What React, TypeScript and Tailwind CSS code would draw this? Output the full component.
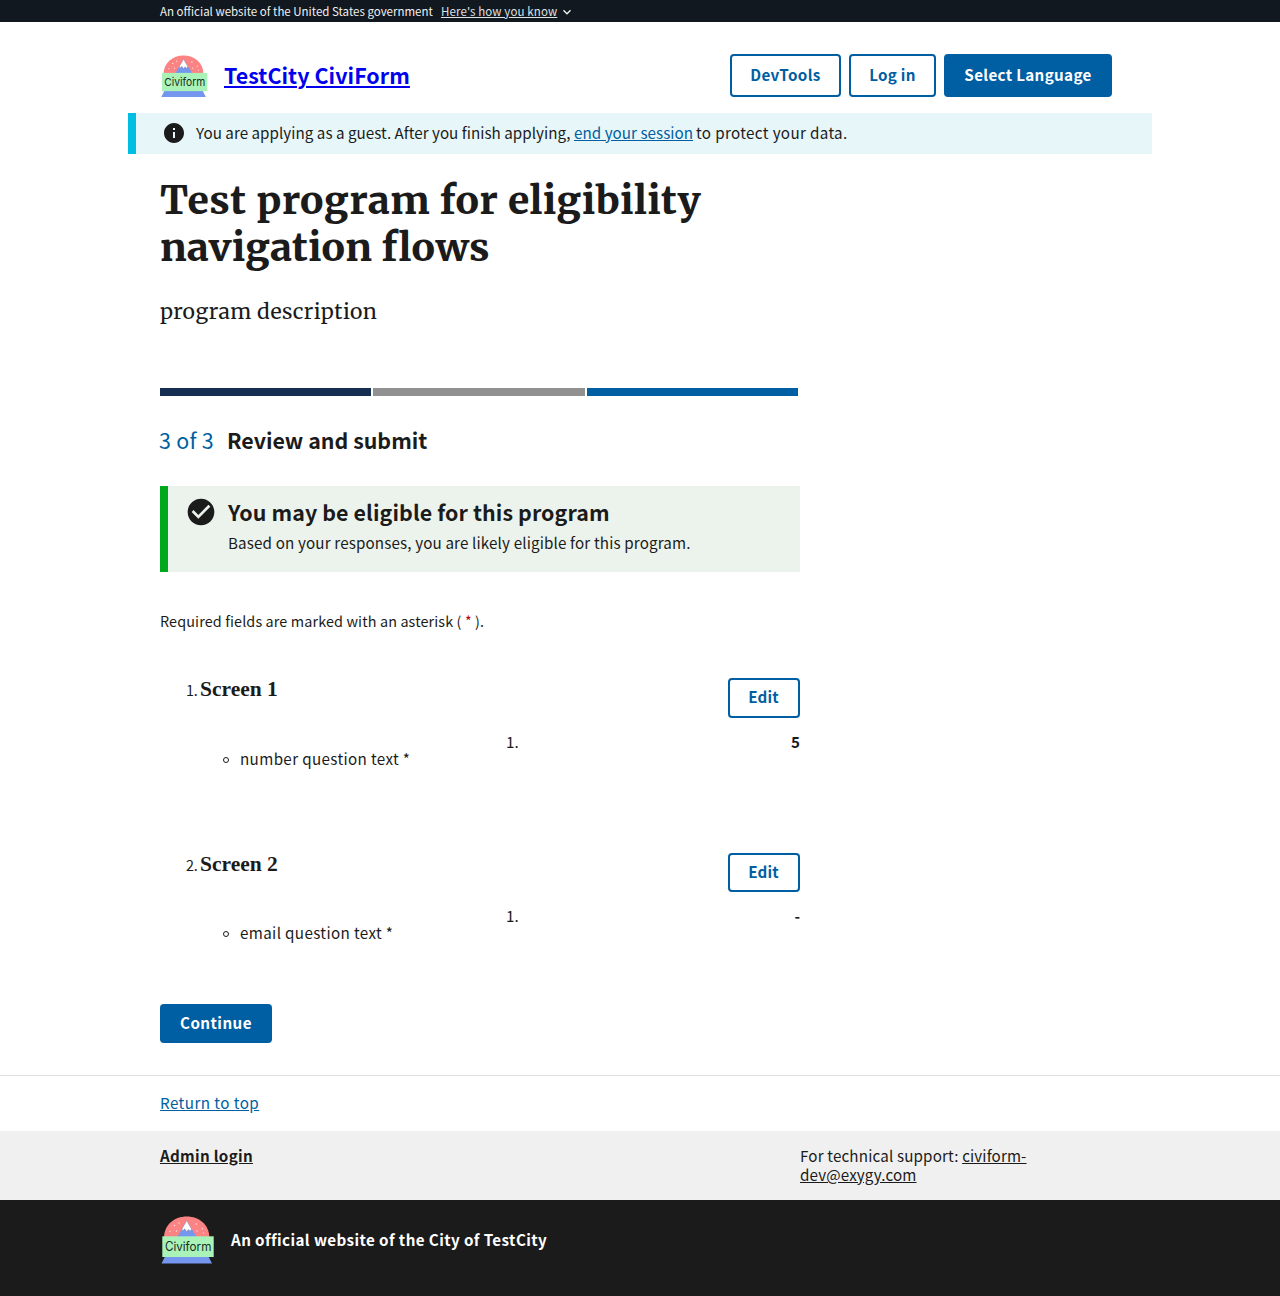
import React from "react";
import { MdCheckCircle, MdInfo, MdExpandMore } from "react-icons/md";

function Logo({ className }: { className: string }) {
  return (
    <svg viewBox="0 0 54 48" className={className} aria-label="Civiform logo">
      <path d="M4 21C4.5 9 14 .6 26.7 .6S49 9 49.3 21z" fill="#fc8383" />
      <path d="M17.3 21 L26.7 4.7 L36.7 21z" fill="#7596ee" />
      <path d="M26.7 4.7 L31.5 13 L30.3 15 L28.3 13.4 L26.7 15.6 L24.8 12.8 L22.6 14.8 L22 13z" fill="#fff" stroke="#8a8a99" strokeWidth=".4" />
      <g fill="#fff" opacity=".8">
        <circle cx="14.5" cy="9.5" r=".8" />
        <circle cx="19" cy="7" r=".7" />
        <circle cx="10" cy="15.5" r=".7" />
        <circle cx="16.5" cy="15" r=".7" />
        <circle cx="36.2" cy="8" r=".8" />
        <circle cx="42.3" cy="12.7" r=".7" />
        <circle cx="37" cy="15" r=".7" />
        <circle cx="43.5" cy="17" r=".6" />
      </g>
      <path d="M5 40.5h43.5l3.5 7.1h-50.5z" fill="#7596ee" />
      <rect x="2.3" y="20.3" width="51.4" height="20.7" fill="#a9f3b8" />
      <text x="4.9" y="35.3" textLength="46.5" lengthAdjust="spacingAndGlyphs" fontSize="12.5" fontFamily="Inter, sans-serif" fill="#1b2b24">
        Civiform
      </text>
    </svg>
  );
}

const outline =
  "flex items-center justify-center rounded border-2 border-[#005ea2] bg-white pb-[2px] font-bold text-[15.2px] leading-none text-[#005ea2]";

function Screen({ n, question, answer, height, edit }: { n: number; question: string; answer: string; height: string; edit: string }) {
  return (
    <section className={height}>
      <div className="flex justify-between">
        <div className="-mt-px flex h-6 items-baseline pl-[26px]">
          <span className="w-[14px] text-[14.4px] leading-6 tracking-[-0.3px]">{n}.</span>
          <h2 className="font-['Liberation_Serif',serif] text-[21.5px] font-bold leading-6">Screen {n}</h2>
        </div>
        <button className={`${outline} ${edit} w-[72px] pr-[1px] tracking-[.15px]`}>Edit</button>
      </div>
      <div className="flex pt-[13px] leading-5">
        <div className="flex w-[346px] items-center pl-[63px] pt-[17px]">
          <span className="mt-[3px] size-[6px] rounded-full border border-[#1b1b1b]" />
          <span className="pl-[11px] tracking-[.36px]">{question}</span>
        </div>
        <span>1.</span>
        <span className="ml-auto font-bold">{answer}</span>
      </div>
    </section>
  );
}

export default function App() {
  return (
    <div className="min-h-[1296px] bg-white font-['Noto_Sans_CJK_SC',sans-serif] text-[15.2px] text-[#1b1b1b]">
      <div className="flex h-[22px] items-center bg-[#11181f] pl-[160px] text-[11.5px] leading-[22px] text-[#f0f0f0]">
        <span className="w-[281px]">An official website of the United States government</span>
        <a className="tracking-[.12px] text-[#dfe1e2] underline underline-offset-1">Here's how you know</a>
        <MdExpandMore className="ml-[2px] mt-[2px] size-4" />
      </div>

      <header className="flex h-[91px] items-start pl-[160px] pr-[168px] pt-8">
        <Logo className="mt-[.6px] h-[42.3px] w-[47.6px]" />
        <a className="ml-[16.4px] pt-[7px] text-[21.4px] font-bold leading-7 tracking-[.08px] text-[#0000ee] underline decoration-2 underline-offset-2">TestCity CiviForm</a>
        <nav className="ml-auto flex gap-2">
          <button className={`${outline} h-[43px] w-[111px] tracking-[.36px]`}>DevTools</button>
          <button className={`${outline} h-[43px] w-[87px] tracking-[.25px]`}>Log in</button>
          <button className="h-[43px] w-[168px] rounded bg-[#005ea2] pb-[2px] font-bold leading-none tracking-[.33px] text-white">Select Language</button>
        </nav>
      </header>

      <div className="mx-auto flex h-[41px] w-[1024px] items-center border-l-8 border-[#00bde3] bg-[#e7f6f8] pb-[1.5px] pl-[26px] leading-5">
        <MdInfo className="size-6" />
        <p className="flex whitespace-pre pb-[2px] pl-[10px]">
          <span className="w-[378px] tracking-[.03px]">You are applying as a guest. After you finish applying,</span>
          <a className="w-[122px] tracking-[.04px] text-[#005ea2] underline underline-offset-1">end your session</a>
          <span className="tracking-[.35px]">to protect your data.</span>
        </p>
      </div>

      <main className="ml-[160px] w-[640px]">
        <h1 className="h-[118px] pt-[23px] font-['Merriweather','DejaVu_Serif_Condensed',serif] text-[39px] font-extrabold leading-[47px]">
          <span className="tracking-[.48px]">Test program for eligibility</span>
          <br />
          <span className="tracking-[.2px]">navigation flows</span>
        </h1>
        <p className="mt-[26px] h-[28px] font-['Merriweather','DejaVu_Serif_Condensed',serif] text-[21.2px] leading-[28px] tracking-[.38px]">program description</p>

        <div className="mt-[62px] flex h-2 w-[638px] gap-[2px]">
          <div className="flex-1 bg-[#162e51]" />
          <div className="flex-1 bg-[#919191]" />
          <div className="flex-1 bg-[#005ea2]" />
        </div>
        <div className="mt-[30px] flex h-7 text-[21.4px] leading-7">
          <span className="ml-[-1px] w-[68px] tracking-[.3px] text-[#005ea2]">3 of 3</span>
          <h2 className="font-bold">Review and submit</h2>
        </div>

        <div className="mt-8 flex h-[86px] border-l-8 border-[#00a91c] bg-[#ecf3ec] pl-[17px] pt-[10px]">
          <MdCheckCircle className="size-8" />
          <div className="pl-[11px]">
            <h3 className="h-8 text-[21.4px] font-bold leading-8 tracking-[.1px]">You may be eligible for this program</h3>
            <p className="leading-7 tracking-[.14px]">Based on your responses, you are likely eligible for this program.</p>
          </div>
        </div>

        <p className="mt-[39px] h-[67px] whitespace-pre text-[14.4px] leading-5 tracking-[.12px]">
          Required fields are marked with an asterisk ( <span className="text-[#b50909]">*</span> ).
        </p>
        <Screen n={1} question="number question text *" answer="5" height="h-[175px]" edit="h-[40px]" />
        <Screen n={2} question="email question text *" answer="-" height="h-[151px]" edit="h-[39px]" />
        <button className="h-[39px] w-[112px] rounded bg-[#005ea2] pb-[2px] font-bold leading-none tracking-[.44px] text-white">Continue</button>
      </main>

      <footer className="mt-8">
        <div className="flex h-14 items-center border-t border-[#dfe1e2] pb-[2px] pl-[160px]">
          <a className="tracking-[.44px] text-[#005ea2] underline underline-offset-1">Return to top</a>
        </div>
        <div className="flex h-[69px] bg-[#f0f0f0] pl-[160px] pt-[15px] leading-[19px]">
          <a className="w-[640px] font-bold tracking-[.3px] underline underline-offset-1">Admin login</a>
          <p className="tracking-[.15px]">
            For technical support: <a className="tracking-[.13px] underline underline-offset-1">civiform-<br />dev@exygy.com</a>
          </p>
        </div>
        <div className="flex h-24 items-start bg-[#1b1b1b] pl-[160px] pt-4">
          <Logo className="h-12 w-[54px]" />
          <span className="pl-[17px] pt-[13px] font-bold leading-5 tracking-[.4px] text-white">An official website of the City of TestCity</span>
        </div>
      </footer>
    </div>
  );
}
